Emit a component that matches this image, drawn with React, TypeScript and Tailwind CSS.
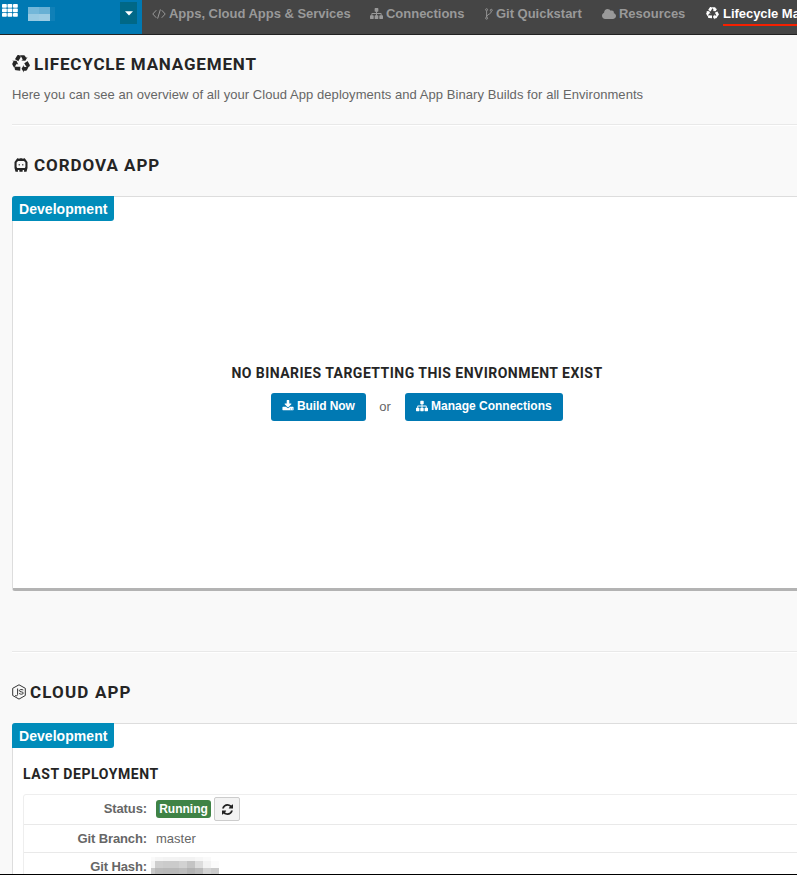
import type { ReactNode } from "react";
import { FaCloud } from "react-icons/fa";

const headFont = "font-['Roboto','Liberation_Sans',sans-serif] font-bold text-[#252525] whitespace-nowrap";

const recyclePath =
  "M836 1169l-15 368-2 22-420-29q-36-3-67-31.5t-47-65.500q-11-27-14.500-55t4-65 12-55 21.500-64 19-53q78 12 509 28zM449 583l180 379-147-92q-63 72-111.500 144.500T298 1135t-39.500 94.500-19.500 67.500l-4 21L44 960q-17-26-18-56t6-47l8-18q35-63 114-188L14 565zM1680 1128l-188 359q-12 29-36.500 46.500t-43.500 20.500l-18 4q-71 7-219 12l8 164-230-367 211-362 7 173q170 16 283 5t170-33zM895 178q-47 63-265 435L313 426l-19-12L519 56q20-31 60-45t80-10q24 2 48.500 12t42 21 41.500 33 36 34.500 36 39.500 32 35zM1550 603l212 363q18 37 12.500 76t-27.500 74q-13 20-33 37t-38 28-48.500 22-47 16-51.500 14-46 12q-34-72-265-436l313-195zM1407 279l142-83-220 373-419-20 151-86q-34-89-75-166t-75.500-123.500-64.500-80-47-46.500l-17-13 405 1q31-3 58 10.500t39 28.500l11 15q39 61 112 190z";
const sitemapPath =
  "M1792 1248v320q0 40-28 68t-68 28h-320q-40 0-68-28t-28-68v-320q0-40 28-68t68-28h96V960H960v192h96q40 0 68 28t28 68v320q0 40-28 68t-68 28H736q-40 0-68-28t-28-68v-320q0-40 28-68t68-28h96V960H320v192h96q40 0 68 28t28 68v320q0 40-28 68t-68 28H96q-40 0-68-28t-28-68v-320q0-40 28-68t68-28h96V960q0-52 38-90t90-38h512V640h-96q-40 0-68-28t-28-68V224q0-40 28-68t68-28h320q40 0 68 28t28 68v320q0 40-28 68t-68 28h-96v192h512q52 0 90 38t38 90v192h96q40 0 68 28t28 68z";
const downloadPath =
  "M1344 1344q0-26-19-45t-45-19-45 19-19 45 19 45 45 19 45-19 19-45zm256 0q0-26-19-45t-45-19-45 19-19 45 19 45 45 19 45-19 19-45zm128-224v320q0 40-28 68t-68 28H160q-40 0-68-28t-28-68v-320q0-40 28-68t68-28h465l135 136q58 56 136 56t136-56l136-136h464q40 0 68 28t28 68zm-325-569q17 41-14 70l-448 448q-18 19-45 19t-45-19L403 621q-31-29-14-70 17-39 59-39h256V64q0-26 19-45t45-19h256q26 0 45 19t19 45v448h256q42 0 59 39z";

function Glyph({ d, size, className = "" }: { d: string; size: number; className?: string }) {
  return (
    <svg width={size} height={size} viewBox="0 0 1792 1792" fill="currentColor" className={`shrink-0 ${className}`}>
      <path d={d} />
    </svg>
  );
}

function GridIcon() {
  return (
    <svg width="16" height="13" viewBox="0 0 16 13" fill="#fff">
      {[0, 5.5, 11].map((x) =>
        [0, 4.5, 9].map((y) => <rect key={`${x}-${y}`} x={x} y={y} width="4.8" height="3.8" rx="0.8" />)
      )}
    </svg>
  );
}

function CodeIcon() {
  return (
    <svg width="14" height="10" viewBox="0 0 14 10" fill="none" stroke="currentColor" strokeWidth="1">
      <path d="M4.3 1.2.8 5l3.5 3.8M9.7 1.2 13.2 5 9.7 8.8M8.4.4 5.6 9.6" />
    </svg>
  );
}

function BranchIcon() {
  return (
    <svg width="8" height="12" viewBox="0 0 8 12" fill="none" stroke="currentColor" strokeWidth="0.9">
      <circle cx="1.6" cy="1.7" r="1" />
      <circle cx="1.6" cy="10.2" r="1" />
      <circle cx="6.3" cy="2.3" r="1" />
      <path d="M1.6 2.8v6.3M6.3 3.4c0 3.2-4.2 2.3-4.6 5.2" />
    </svg>
  );
}

function CordovaIcon() {
  return (
    <svg width="14" height="14" viewBox="0 0 14 14">
      <path
        fill="#252525"
        fillRule="evenodd"
        d="M3.300.3h1.300v.700h.8V.3h3.200v.700h.8V.3H10.700L13.500 4v6l-1 3.700H10l.1-1.700H8.700l-.1 1.700H5.400l-.1-1.700H3.900l.1 1.700H1.500L.5 10V4ZM4 2.900 2.600 4.600v4.400l.6.900h7.600l.6-.9V4.600L10 2.900Z"
      />
      <path fill="#252525" d="M4.700 6h1v1.500h-1zM8.300 6h1v1.500h-1z" />
    </svg>
  );
}

function NodeIcon() {
  return (
    <svg width="14" height="16" viewBox="0 0 14 16" fill="none" stroke="#333" strokeWidth="1">
      <path d="M7 .8 13.3 4.300v7.200L7 15.100.700 11.500V4.300Z" strokeLinejoin="round" />
      <path d="M5.600 4.500v6c0 1.300-1 1.600-2.400 1M11.300 6c-1.300-.700-4-.700-4 .7 0 1.700 4 .6 4 2.300 0 1.700-3.200 1.400-4.200.4" />
    </svg>
  );
}

function RefreshIcon() {
  return (
    <svg width="11" height="11" viewBox="0 0 1536 1536" fill="#222">
      <path d="M1511 928q0 5-1 7-64 268-268 434.500T764 1536q-146 0-282.500-55T238 1324l-129 129q-19 19-45 19t-45-19-19-45V960q0-26 19-45t45-19h448q26 0 45 19t19 45-19 45l-137 137q71 66 161 102t187 36q134 0 250-65t186-179q11-17 53-117 8-23 30-23h192q13 0 22.500 9.500t9.500 22.500zm25-800v448q0 26-19 45t-45 19h-448q-26 0-45-19t-19-45 19-45l138-138Q969 256 768 256q-134 0-250 65T332 500q-11 17-53 117-8 23-30 23H50q-13 0-22.500-9.500T18 608v-7q65-268 270-434.500T768 0q146 0 284 55.500T1297 212l130-129q19-19 45-19t45 19 19 45z" />
    </svg>
  );
}

function NavItem({ width, icon, iconWidth, children, active = false }: { width: string; icon: ReactNode; iconWidth: string; children: ReactNode; active?: boolean }) {
  return (
    <a className={`flex h-[27px] shrink-0 items-center text-[13px] font-bold whitespace-nowrap ${width} ${active ? "tracking-[-0.04px] text-white" : "tracking-[-0.02px] text-[#999]"}`}>
      <span className={`shrink-0 ${iconWidth}`}>{icon}</span>
      <span className={active ? "mt-[3px] h-[22px] border-b-2 border-[#f62000] leading-[19px]" : ""}>{children}</span>
    </a>
  );
}

function EnvTag() {
  return (
    <div className="-mt-px -ml-px h-[25px] w-[102px] rounded-tl-[3px] rounded-br-[3px] bg-[#008cba] pl-[7px] text-[14px] leading-[26px] font-bold tracking-[0.05px] text-white">
      Development
    </div>
  );
}

function Divider() {
  return <div className="ml-3 h-[2px] border-t border-b border-t-[#e9e9e9] border-b-white" />;
}

const hash = [
  ["#fafafa", "#f5f5f5", "#f3f3f3", "#f3f3f3", "#f2f2f2", "#f2f2f2", "#f6f6f6", "#fafafa", "#fff"],
  ["#f4f4f4", "#cecece", "#cbcbcb", "#cbcbcb", "#d2d2d2", "#c4c4c4", "#dcdcdc", "#f2f2f2", "#fbfbfb"],
  ["#c8c8c8", "#bababa", "#b8b8b8", "#b8b8b8", "#bcbcbc", "#b2b2b2", "#bababa", "#d2d2d2", "#cacaca"],
];

export default function App() {
  return (
    <div className="flex h-[875px] w-[797px] flex-col overflow-hidden border-b border-black bg-[#f9f9f9] font-['Liberation_Sans',Arial,sans-serif] text-[13px] text-[#666]">
      <header className="flex h-[35px] shrink-0 border-b border-[#222] bg-[#454545]">
        <div className="flex h-full w-[142px] shrink-0 bg-[#0079b3]">
          <div className="mt-1 ml-[2px] w-[26px]"><GridIcon /></div>
          <div className="mt-[7px] flex h-[14px] w-[92px]">
            <div className="grid w-[22px] grid-cols-2 grid-rows-2">
              <span className="bg-[#73b7d9]" /><span className="bg-[#68b0d4]" />
              <span className="bg-[#98cae2]" /><span className="bg-[#9dcce3]" />
            </div>
            <div className="w-[5px] bg-[#1080b7]" />
          </div>
          <div className="mt-[2px] flex h-[22px] w-[17px] items-center justify-center bg-[#006887]">
            <svg width="8" height="5" viewBox="0 0 8 5" fill="#fff"><path d="M0 .2h8L4 4.500Z" /></svg>
          </div>
        </div>
        <nav className="flex pl-[10px]">
          <NavItem width="w-[218px]" iconWidth="w-[17px]" icon={<CodeIcon />}>Apps, Cloud Apps &amp; Services</NavItem>
          <NavItem width="w-[115px]" iconWidth="w-4" icon={<Glyph d={sitemapPath} size={13} />}>Connections</NavItem>
          <NavItem width="w-[117px]" iconWidth="w-[11px]" icon={<BranchIcon />}>Git Quickstart</NavItem>
          <NavItem width="w-[104px]" iconWidth="w-[17px]" icon={<FaCloud size={14} />}>Resources</NavItem>
          <NavItem width="w-[180px]" iconWidth="w-[17px]" icon={<Glyph d={recyclePath} size={13} />} active>Lifecycle Management</NavItem>
        </nav>
      </header>

      <main className="flex min-h-0 flex-1 flex-col">
        <div className="ml-3 flex h-[38px] shrink-0 items-end">
          <Glyph d={recyclePath} size={18} className="mr-1 text-[#252525]" />
          <h1 className={`${headFont} text-[17px] leading-[18px] tracking-[0.82px]`}>LIFECYCLE MANAGEMENT</h1>
        </div>
        <p className="mt-[13px] mb-[20px] ml-3 h-[18px] shrink-0 leading-[18px] tracking-[0.058px] whitespace-nowrap">
          Here you can see an overview of all your Cloud App deployments and App Binary Builds for all Environments
        </p>
        <Divider />

        <div className="mt-[29px] ml-[14px] flex h-[20px] shrink-0 items-center">
          <span className="w-5"><CordovaIcon /></span>
          <h2 className={`${headFont} text-[17px] leading-5 tracking-[0.95px]`}>CORDOVA APP</h2>
        </div>
        <section className="mt-[21px] -mr-[25px] ml-3 flex h-[395px] shrink-0 flex-col rounded-[3px] border border-b-[3px] border-[#ddd] border-b-[#b3b3b3] bg-white">
          <EnvTag />
          <div className="mt-[143px] flex flex-col items-center">
            <h3 className={`${headFont} text-[14px] leading-[18px] tracking-[0.47px]`}>NO BINARIES TARGETTING THIS ENVIRONMENT EXIST</h3>
            <div className="mt-[11px] flex items-center">
              <button className="flex h-7 w-[95px] items-center rounded-[3px] bg-[#0079b3] pb-[2px] pl-[11px] text-[12px] font-bold tracking-[-0.1px] whitespace-nowrap text-white">
                <Glyph d={downloadPath} size={12} className="mr-[3px]" />Build Now
              </button>
              <span className="w-[39px] pr-px pb-px text-center">or</span>
              <button className="flex h-7 w-[158px] items-center rounded-[3px] bg-[#0079b3] pb-[2px] pl-[11px] text-[12px] font-bold whitespace-nowrap text-white">
                <Glyph d={sitemapPath} size={12} className="mr-[3px]" />Manage Connections
              </button>
            </div>
          </div>
        </section>

        <div className="mt-[60px] shrink-0"><Divider /></div>

        <div className="mt-[29px] ml-3 flex h-[20px] shrink-0 items-center">
          <span className="w-[18px]"><NodeIcon /></span>
          <h2 className={`${headFont} text-[17px] leading-5 tracking-[1.15px]`}>CLOUD APP</h2>
        </div>
        <section className="mt-[21px] -mr-[25px] ml-3 flex h-[300px] shrink-0 flex-col rounded-[3px] border border-[#ddd] bg-white">
          <EnvTag />
          <h3 className={`${headFont} mt-[17px] ml-[10px] text-[14px] leading-[18px] tracking-[0.57px]`}>LAST DEPLOYMENT</h3>
          <div className="mt-[11px] ml-[10px] flex flex-col rounded-[3px] border border-[#eee]">
            <div className="flex h-[30px] items-center border-b border-[#e9e9e9] pb-px">
              <span className="w-[123px] text-right font-bold tracking-[-0.1px]">Status:</span>
              <span className="ml-[9px] h-[18px] w-[55px] rounded-[3px] bg-[#3f8346] text-center text-[12px] leading-[18px] font-bold text-white">Running</span>
              <button className="ml-[3px] flex h-6 w-[26px] items-center justify-center rounded-[2px] border border-[#ccc] bg-[#f3f3f3]"><RefreshIcon /></button>
            </div>
            <div className="flex h-[28px] items-center border-b border-[#e9e9e9]">
              <span className="w-[123px] text-right font-bold tracking-[-0.12px]">Git Branch:</span>
              <span className="ml-[9px]">master</span>
            </div>
            <div className="flex h-[28px] items-center">
              <span className="w-[123px] text-right font-bold tracking-[-0.12px]">Git Hash:</span>
              <div className="mt-1 ml-[4px] flex flex-col self-start">
                {hash.map((row, r) => (
                  <div key={r} className={r === 0 ? "flex h-[4px]" : "flex h-[7px]"}>
                    {row.map((c, i) => <span key={i} className={i === 0 ? "w-[4px]" : "w-[8px]"} style={{ backgroundColor: c }} />)}
                  </div>
                ))}
              </div>
            </div>
          </div>
        </section>
      </main>
    </div>
  );
}
